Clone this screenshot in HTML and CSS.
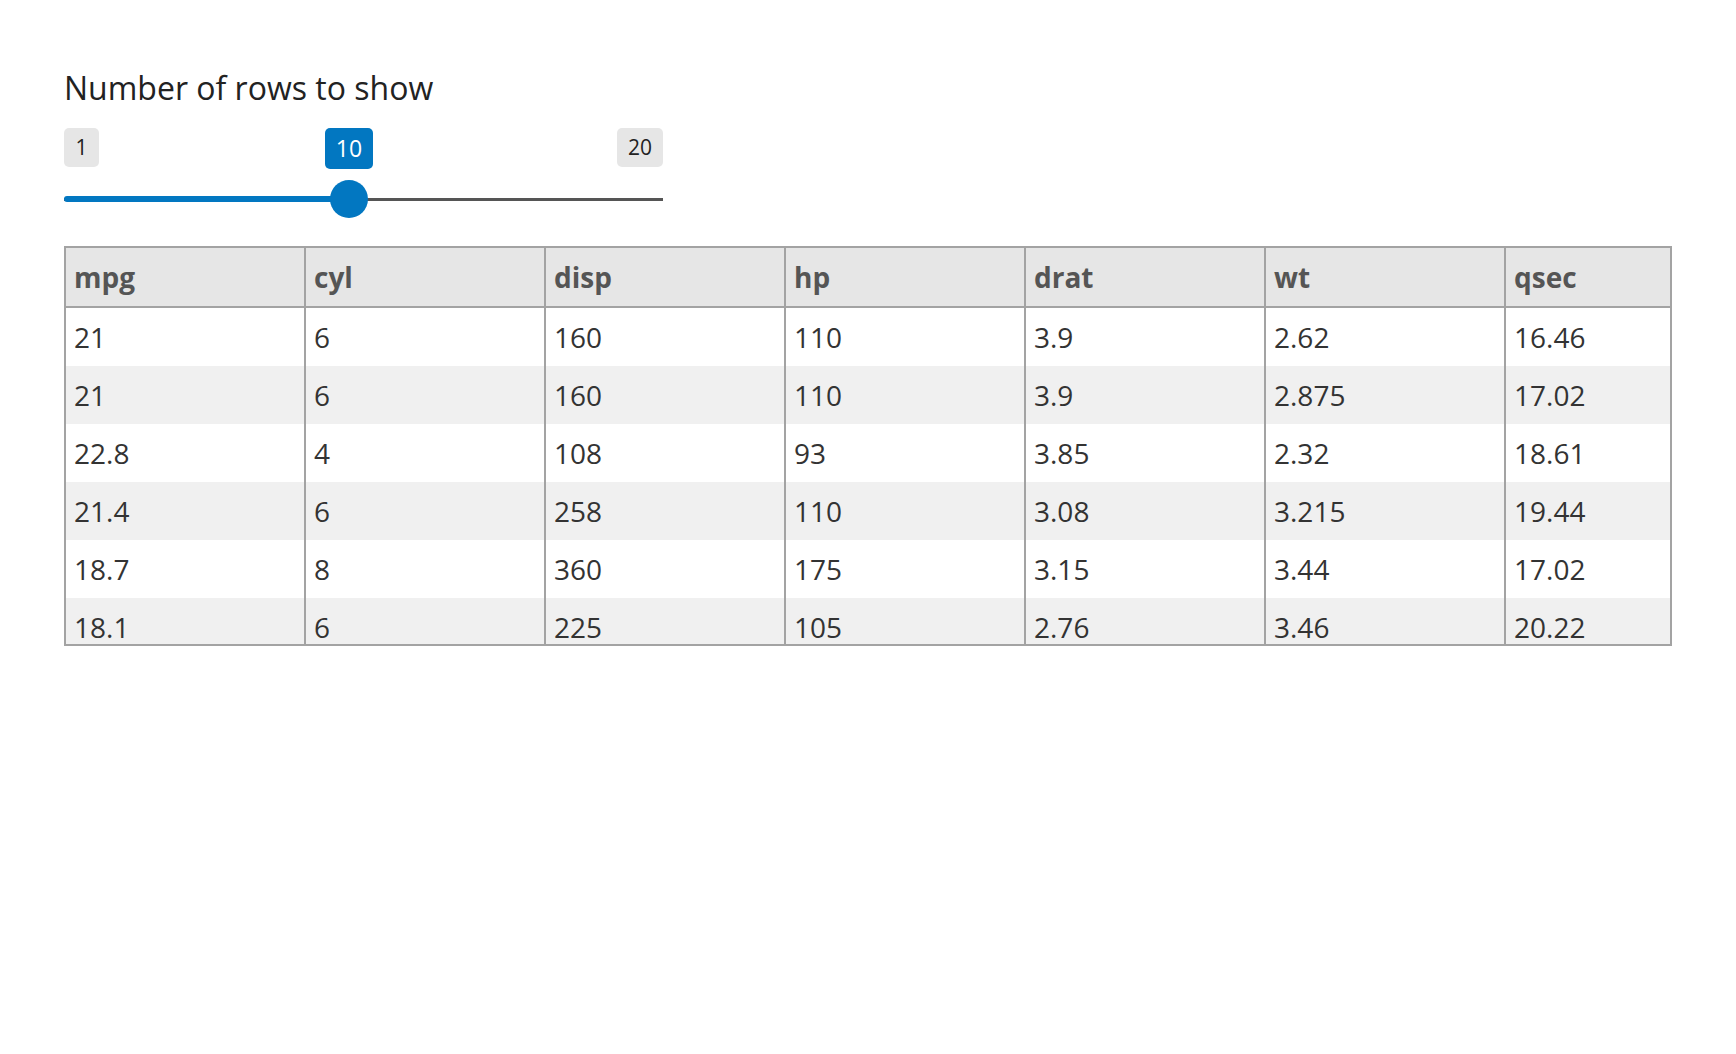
FILE: index.html
```html
<!DOCTYPE html>
<html lang="en">
<head>
<meta charset="utf-8">
<title>Number of rows to show</title>
<link rel="stylesheet" href="styles.css">
</head>
<body>
<div class="page">
  <div class="title">Number of rows to show</div>
  <div class="slider">
    <span class="lbl lbl-min">1</span>
    <span class="lbl lbl-max">20</span>
    <span class="lbl-single">10</span>
    <div class="track"></div>
    <div class="bar"></div>
    <div class="thumb"></div>
  </div>
  <div class="table-wrap">
    <table class="data">
      <thead>
        <tr><th>mpg</th><th>cyl</th><th>disp</th><th>hp</th><th>drat</th><th>wt</th><th>qsec</th></tr>
      </thead>
      <tbody>
        <tr><td>21</td><td>6</td><td>160</td><td>110</td><td>3.9</td><td>2.62</td><td>16.46</td></tr>
        <tr><td>21</td><td>6</td><td>160</td><td>110</td><td>3.9</td><td>2.875</td><td>17.02</td></tr>
        <tr><td>22.8</td><td>4</td><td>108</td><td>93</td><td>3.85</td><td>2.32</td><td>18.61</td></tr>
        <tr><td>21.4</td><td>6</td><td>258</td><td>110</td><td>3.08</td><td>3.215</td><td>19.44</td></tr>
        <tr><td>18.7</td><td>8</td><td>360</td><td>175</td><td>3.15</td><td>3.44</td><td>17.02</td></tr>
        <tr><td>18.1</td><td>6</td><td>225</td><td>105</td><td>2.76</td><td>3.46</td><td>20.22</td></tr>
      </tbody>
    </table>
  </div>
</div>
</body>
</html>
```

FILE: styles.css
```css
* { box-sizing: border-box; }
html, body { margin: 0; padding: 0; background: #fff; }
body {
  font-family: "Open Sans", "Noto Sans", "Liberation Sans", sans-serif;
  color: #333;
}
.page {
  padding: 70px 64px 0 64px;
}
.title {
  font-size: 32px;
  line-height: 36px;
  color: #222;
}
.slider {
  position: relative;
  margin-top: 22px;
  width: 599px;
  height: 90px;
}
.lbl {
  position: absolute;
  top: 0;
  height: 39px;
  line-height: 39px;
  padding: 0 11.5px;
  font-size: 21px;
  color: #222;
  background: #e6e6e6;
  border-radius: 5px;
}
.lbl-min { left: 0; }
.lbl-max { right: 0; padding: 0 11px; }
.lbl-single {
  position: absolute;
  top: 0;
  left: 261px;
  width: 48px;
  height: 41px;
  line-height: 41px;
  text-align: center;
  font-size: 23px;
  color: #fff;
  background: #0277c1;
  border-radius: 5px;
}
.track {
  position: absolute;
  left: 0;
  right: 0;
  top: 69.5px;
  height: 3px;
  background: #555;
}
.bar {
  position: absolute;
  left: 0;
  width: 286px;
  top: 68px;
  height: 6px;
  background: #0277c1;
  border-radius: 3px 0 0 3px;
}
.thumb {
  position: absolute;
  left: 266px;
  top: 52px;
  width: 38px;
  height: 38px;
  border-radius: 50%;
  background: #0277c1;
}
.table-wrap {
  margin-top: 28px;
  width: 1608px;
  height: 400px;
  border: 2px solid #a3a3a3;
  overflow: hidden;
}
.data {
  border-collapse: separate;
  border-spacing: 0;
  table-layout: fixed;
  width: 1604px;
  font-size: 28px;
}
.data th, .data td {
  width: 240px;
  text-align: left;
  padding: 9px 8px;
  line-height: 40px;
  border-right: 2px solid #a3a3a3;
  white-space: nowrap;
}
.data th:last-child, .data td:last-child {
  width: auto;
  border-right: none;
}
.data th {
  background: #e6e6e6;
  color: #555;
  font-weight: 700;
  border-bottom: 2px solid #a3a3a3;
}
.data td {
  color: #333;
}
.data tbody tr:nth-child(even) td {
  background: #f0f0f0;
}
```
